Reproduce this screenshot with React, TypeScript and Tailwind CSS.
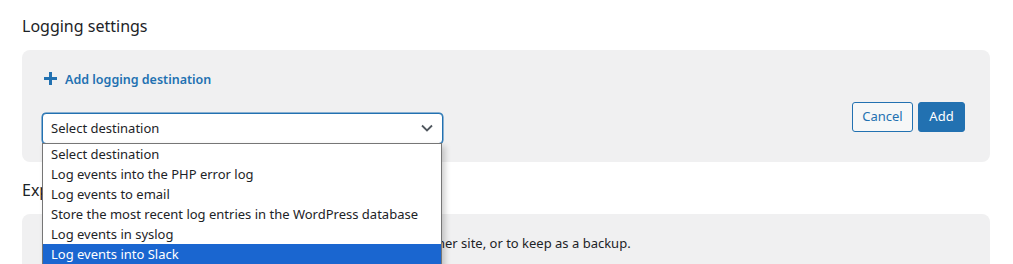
import React from "react";

const options = [
  "Select destination",
  "Log events into the PHP error log",
  "Log events to email",
  "Store the most recent log entries in the WordPress database",
  "Log events in syslog",
  "Log events into Slack",
];

export default function App() {
  return (
    <div
      className="w-[1013px] h-[264px] overflow-hidden bg-white px-[22px] text-[#1d2327]"
      style={{ fontFamily: '"Noto Sans", "Open Sans", sans-serif' }}
    >
      <h2 className="pt-[14px] text-[16px] leading-[24px] font-normal text-[#1d2327]">Logging settings</h2>
      <div className="mt-[12px] h-[112px] w-[968px] rounded-[8px] bg-[#f0f0f1] px-[22px] pt-[21px]">
        <button className="flex items-center gap-[8px] text-[12.5px] font-semibold text-[#2271b1]">
          <svg width="13" height="13" viewBox="0 0 13 13" className="-mt-[4px]">
            <rect x="5" y="0" width="3" height="13" fill="#2271b1" />
            <rect x="0" y="5" width="13" height="3" fill="#2271b1" />
          </svg>
          <span>Add logging destination</span>
        </button>
        <div className="mt-[12px] flex items-start justify-between">
          <div className="relative mt-[11px] ml-[-2px]">
            <div className="flex h-[31px] w-[401px] items-center justify-between rounded-[4px] border border-[#2271b1] bg-white pl-[8px] pr-[9px] text-[13px] shadow-[0_0_0_0.5px_#2271b1]">
              <span>Select destination</span>
              <svg width="12" height="8" viewBox="0 0 12 8">
                <path d="M1 1.5 L6 6.5 L11 1.5" fill="none" stroke="#50575e" strokeWidth="1.8" />
              </svg>
            </div>
            <div className="absolute left-0 top-[30px] z-10 w-[400px] border border-[#767676] bg-white pb-[20px] shadow-[3px_3px_6px_rgba(0,0,0,0.2)]">
              {options.map((o, i) => (
                <div
                  key={o}
                  className={
                    "h-[20px] pl-[8px] text-[13px] leading-[20px] " +
                    (i === 5 ? "bg-[#1a66d0] text-white" : "text-[#1d2327]")
                  }
                >
                  {o}
                </div>
              ))}
            </div>
          </div>
          <div className="flex gap-[5px] mr-[3px]">
            <button className="h-[30px] w-[61px] rounded-[3px] border border-[#2271b1] bg-[#f6f7f7] text-[13px] text-[#2271b1]">
              Cancel
            </button>
            <button className="h-[30px] w-[47px] rounded-[3px] border border-[#2271b1] bg-[#2271b1] text-[13px] text-white">
              Add
            </button>
          </div>
        </div>
      </div>
      <h2 className="mt-[16px] text-[16px] leading-[24px] font-normal">Export</h2>
      <div className="mt-[12px] h-[80px] w-[968px] rounded-[8px] bg-[#f0f0f1] px-[22px] pt-[20px] text-[13px]">
        Export the Simple History plugin settings to import them to another site, or to keep as a backup.
      </div>
    </div>
  );
}
